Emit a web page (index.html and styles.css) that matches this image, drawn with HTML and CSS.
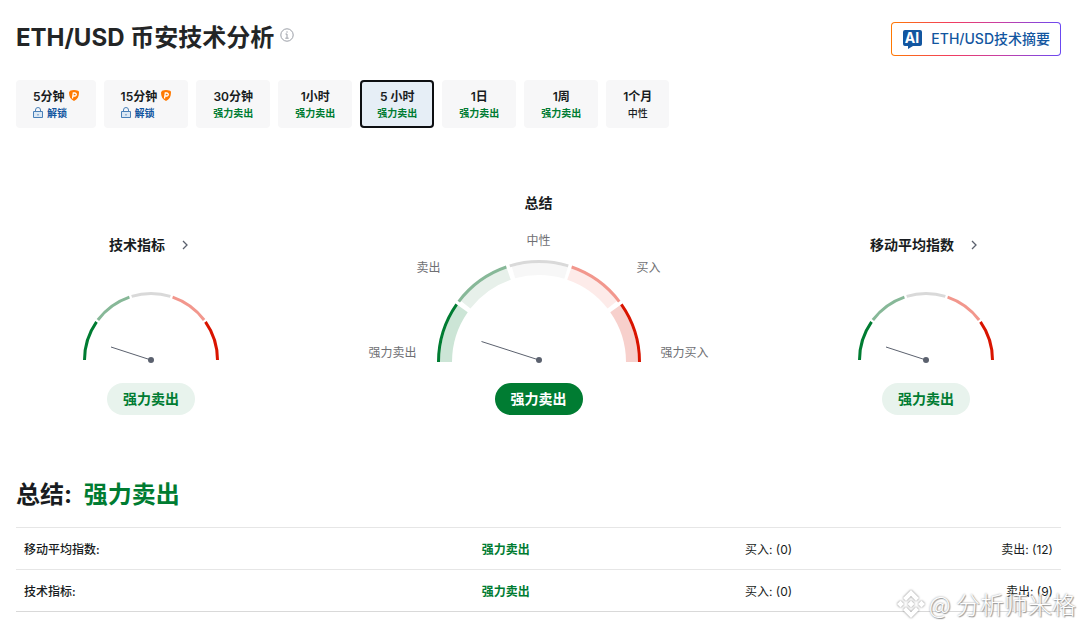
FILE: index.html
```
<!DOCTYPE html>
<html lang="zh-CN">
<head>
  <meta charset="UTF-8">
  <meta name="viewport" content="width=device-width, initial-scale=1.0">
  <title>ETH/USD 币安技术分析</title>
  <link rel="stylesheet" href="styles.css">
</head>
<body>
  <svg class="defs" width="0" height="0" aria-hidden="true">
    <symbol id="pro" viewBox="0 0 10 11">
      <path d="M1 .8Q5-.6 9 .8 10 1 10 2.500C10 6.500 8.500 9.500 5 11 1.500 9.500 0 6.500 0 2.500 0 1 1 .8Z" fill="#ff7901"/>
      <path d="M3.500 8.500l.8-5.500h1.500a1.500 1.500 0 0 1 0 3H4.200" fill="none" stroke="#fff" stroke-width="1.300"/>
    </symbol>
    <symbol id="lock" viewBox="0 0 10 11">
      <path d="M.5 4.500h9v6h-9z" fill="#dce8f4" stroke="#4a80b8"/>
      <path d="M2.500 4.500V3a2.500 2.500 0 0 1 5 0v1.500M5 7v1.500" fill="none" stroke="#4a80b8"/>
    </symbol>
    <symbol id="arrow" viewBox="0 0 6 10">
      <path d="M1 1l4 4-4 4" fill="none" stroke="#5b616e" stroke-width="1.300"/>
    </symbol>
    <symbol id="small-gauge" viewBox="0 0 136 72">
      <g fill="none" stroke-width="3">
        <path class="seg1" pathLength="180" d="M1.500 68a66.500 66.500 0 0 1 133 0"/>
        <path class="seg2" pathLength="180" d="M1.500 68a66.500 66.500 0 0 1 133 0"/>
        <path class="seg3" pathLength="180" d="M1.500 68a66.500 66.500 0 0 1 133 0"/>
        <path class="seg4" pathLength="180" d="M1.500 68a66.500 66.500 0 0 1 133 0"/>
        <path class="seg5" pathLength="180" d="M1.500 68a66.500 66.500 0 0 1 133 0"/>
      </g>
      <path d="M28 55l40 13" stroke="#5b616e"/>
      <circle cx="68" cy="68" r="3" fill="#5b616e"/>
    </symbol>
  </svg>

  <main class="technical">
    <header class="head">
      <h1>ETH/USD 币安技术分析</h1>
      <svg class="info" viewBox="0 0 14 14" aria-hidden="true">
        <circle cx="7" cy="7" r="6.200" fill="none" stroke="#9a9ea6"/>
        <path d="M5.500 6H7v4M5.300 10.200h3.400M7 3.300v1.400" fill="none" stroke="#9a9ea6"/>
      </svg>
      <button class="ai-btn" type="button">
        <svg viewBox="0 0 19 19" aria-hidden="true">
          <path d="M2 0h15a2 2 0 0 1 2 2v12a2 2 0 0 1-2 2h-7l-5 3v-3H2a2 2 0 0 1-2-2V2a2 2 0 0 1 2-2z" fill="#1256a0"/>
          <text x="9" y="13" text-anchor="middle">AI</text>
        </svg>
        ETH/USD技术摘要
      </button>
    </header>

    <nav class="tabs">
      <button type="button"><b>5分钟<svg class="pro"><use href="#pro"/></svg></b><span class="unlock"><svg class="lock"><use href="#lock"/></svg>解锁</span></button>
      <button type="button"><b>15分钟<svg class="pro"><use href="#pro"/></svg></b><span class="unlock"><svg class="lock"><use href="#lock"/></svg>解锁</span></button>
      <button type="button"><b>30分钟</b><span class="sell">强力卖出</span></button>
      <button type="button"><b>1小时</b><span class="sell">强力卖出</span></button>
      <button type="button" class="active"><b>5 小时</b><span class="sell">强力卖出</span></button>
      <button type="button"><b>1日</b><span class="sell">强力卖出</span></button>
      <button type="button"><b>1周</b><span class="sell">强力卖出</span></button>
      <button type="button"><b>1个月</b><span>中性</span></button>
    </nav>

    <section class="gauges">
      <div class="gauge-box">
        <a class="gauge-title" href="#">技术指标<svg><use href="#arrow"/></svg></a>
        <svg class="small-gauge"><use href="#small-gauge"/></svg>
        <div class="badge">强力卖出</div>
      </div>

      <div class="gauge-box main-box">
        <h2>总结</h2>
        <div class="dial">
          <div class="neutral">中性</div>
          <div class="mid"><span>卖出</span><span>买入</span></div>
          <div class="ends"><span>强力卖出</span><span>强力买入</span></div>
          <svg class="big-gauge" viewBox="0 0 204 102" aria-hidden="true">
            <g class="band" fill="none" stroke-width="12">
              <path class="seg1" pathLength="180" d="M9 102a93 93 0 0 1 186 0"/>
              <path class="seg2" pathLength="180" d="M9 102a93 93 0 0 1 186 0"/>
              <path class="seg3" pathLength="180" d="M9 102a93 93 0 0 1 186 0"/>
              <path class="seg4" pathLength="180" d="M9 102a93 93 0 0 1 186 0"/>
              <path class="seg5" pathLength="180" d="M9 102a93 93 0 0 1 186 0"/>
            </g>
            <g fill="none" stroke-width="3">
              <path class="seg1" pathLength="180" d="M1.500 102a100.500 100.500 0 0 1 201 0"/>
              <path class="seg2" pathLength="180" d="M1.500 102a100.500 100.500 0 0 1 201 0"/>
              <path class="seg3" pathLength="180" d="M1.500 102a100.500 100.500 0 0 1 201 0"/>
              <path class="seg4" pathLength="180" d="M1.500 102a100.500 100.500 0 0 1 201 0"/>
              <path class="seg5" pathLength="180" d="M1.500 102a100.500 100.500 0 0 1 201 0"/>
            </g>
            <path d="M44.500 81.500L102 100" stroke="#5b616e"/>
            <circle cx="102" cy="100" r="3" fill="#5b616e"/>
          </svg>
        </div>
        <div class="badge solid">强力卖出</div>
      </div>

      <div class="gauge-box">
        <a class="gauge-title" href="#">移动平均指数<svg><use href="#arrow"/></svg></a>
        <svg class="small-gauge"><use href="#small-gauge"/></svg>
        <div class="badge">强力卖出</div>
      </div>
    </section>

    <h2 class="summary">总结: <span class="sell">强力卖出</span></h2>
    <table>
      <tr>
        <th scope="row">移动平均指数:</th>
        <td class="sell">强力卖出</td>
        <td>买入: (0)</td>
        <td>卖出: (12)</td>
      </tr>
      <tr>
        <th scope="row">技术指标:</th>
        <td class="sell">强力卖出</td>
        <td>买入: (0)</td>
        <td>卖出: (9)</td>
      </tr>
    </table>
  </main>

  <div class="watermark">
    <svg viewBox="0 0 28 28" aria-hidden="true">
      <path d="M14 0l8 8-3 3-5-5-5 5-3-3zM14 28l8-8-3-3-5 5-5-5-3 3zM14 10.500l3.500 3.500-3.500 3.500-3.500-3.500zM3.500 10.500L7 14l-3.500 3.500L0 14zM24.500 10.500L28 14l-3.500 3.500L21 14z"/>
    </svg>
    <span>@ 分析师米格</span>
  </div>
</body>
</html>
```
FILE: styles.css
```
*{ box-sizing: border-box; margin: 0; padding: 0; }
body{
  background: #fff; color: #181c21;
  font-family: Inter, "Noto Sans CJK SC", sans-serif;
  font-size: 12px; line-height: 18px;
}
button{ font: inherit; color: inherit; border: 0; cursor: pointer; }
a{ color: inherit; text-decoration: none; }
.defs{ position: absolute; }
.technical{ padding: 22px 22px 0 16px; }
.sell{ color: #007c32; }

/* header */
.head{ display: flex; height: 34px; }
.head h1{ font-size: 24px; line-height: 32px; font-weight: 700; color: #232526; }
.info{ width: 14px; height: 14px; margin: 6px 0 0 6px; }
.ai-btn{
  display: flex; align-items: center; gap: 9px;
  margin-left: auto; padding: 0 10px 0 11px;
  border: 1px solid transparent; border-radius: 4px;
  background: linear-gradient(#fff, #fff) padding-box,
    linear-gradient(90deg, #ff7901, #f23c5f 35%, #c63fa6 65%, #6a48f2) border-box;
  color: #1256a0; font-size: 14px; font-weight: 500;
}
.ai-btn svg{ width: 19px; height: 19px; }
.ai-btn text{ font-size: 14px; font-weight: 700; fill: #fff; }

/* tabs */
.tabs{ display: flex; gap: 8px; margin-top: 24px; }
.tabs button{
  display: flex; flex-direction: column; align-items: center; justify-content: center;
  height: 48px; padding: 1px 17px 0;
  border-radius: 4px; background: #f7f7f8;
  font-size: 10px; line-height: 16px; font-weight: 500;
}
.tabs b{ font-size: 12px; line-height: 17px; font-weight: 600; }
.tabs .active{ background: #e6eef6; box-shadow: inset 0 0 0 2px #0d0f12; }
.tabs .sell, .tabs .unlock{ font-weight: 600; }
.tabs .unlock{ align-self: flex-start; color: #1256a0; }
.pro{ width: 10px; height: 11px; margin-left: 4px; }
.lock{ width: 10px; height: 11px; margin-right: 4px; vertical-align: -1px; }

/* gauges */
.gauges{ display: grid; grid-template-columns: 270px 340px 270px; justify-content: space-between; margin-top: 64px; }
.gauge-box{ display: flex; flex-direction: column; align-items: center; padding-top: 42px; }
.gauge-title{ display: flex; align-items: center; gap: 17px; padding-right: 5px; font-size: 14px; line-height: 22px; font-weight: 700; }
.gauge-title svg{ width: 6px; height: 10px; }
.small-gauge{ width: 136px; height: 72px; margin: 36px 0 19px; }
.seg1{ stroke: #007c32; stroke-dasharray: 35 200; }
.seg2{ stroke: #87b898; stroke-dasharray: 34 200; stroke-dashoffset: -37; }
.seg3{ stroke: #d9d9d9; stroke-dasharray: 34 200; stroke-dashoffset: -73; }
.seg4{ stroke: #f2978d; stroke-dasharray: 34 200; stroke-dashoffset: -109; }
.seg5{ stroke: #d91400; stroke-dasharray: 36 200; stroke-dashoffset: -145; }
.badge{
  padding: 5px 16px; border-radius: 16px;
  background: #e8f3ed; color: #007c32;
  font-size: 14px; line-height: 22px; font-weight: 700;
}
.solid{ background: #007c32; color: #fff; }

.main-box{ padding-top: 0; }
.main-box h2{ font-size: 14px; line-height: 22px; }
.dial{
  display: grid; grid-template-rows: 28px 85px 17px;
  width: 100%; margin: 18px 0 21px;
  color: #6f7074;
}
.neutral{ text-align: center; }
.mid, .ends{ display: flex; justify-content: space-between; grid-column: 1; line-height: 16px; }
.mid{ grid-row: 2; padding: 0 48px; }
.ends{ grid-row: 3; }
.big-gauge{ grid-area: 2 / 1 / 4 / 2; justify-self: center; width: 204px; height: 102px; overflow: visible; }
.band .seg1{ stroke: #cce5d6; stroke-dasharray: 35 200; }
.band .seg2{ stroke: #e7f0ea; stroke-dasharray: 33 200; stroke-dashoffset: -38; }
.band .seg3{ stroke: #f7f7f7; stroke-dasharray: 33 200; stroke-dashoffset: -74; }
.band .seg4{ stroke: #fdebe9; stroke-dasharray: 33 200; stroke-dashoffset: -109; }
.band .seg5{ stroke: #f7d0cc; stroke-dasharray: 36 200; stroke-dashoffset: -145; }

/* summary */
.summary{ margin-top: 64px; font-size: 24px; line-height: 32px; }
.summary .sell{ margin-left: 6px; }
table{ width: 100%; margin-top: 16px; border-collapse: collapse; table-layout: fixed; border-bottom: 1px solid #d9d9d9; }
tr{ border-top: 1px solid #e6e6e6; }
th, td{ height: 42px; padding: 2px 8px 0; text-align: left; font-weight: 400; }
th{ width: 43.8%; font-weight: 500; }
td.sell{ width: 25.2%; font-weight: 700; }
td:last-child{ text-align: right; }

/* watermark lies over the page corner */
.watermark{
  position: absolute; right: 7px; bottom: 8px;
  display: flex; align-items: center; gap: 4px;
  color: #fff; font-family: "Noto Sans CJK SC", sans-serif;
  font-size: 24px; line-height: 36px; font-weight: 300;
  text-shadow: 0 0 2px #888, 1px 1px 1px #999;
  pointer-events: none;
}
.watermark svg{ width: 28px; height: 28px; fill: #fff; filter: drop-shadow(0 0 1px #777); }
```
